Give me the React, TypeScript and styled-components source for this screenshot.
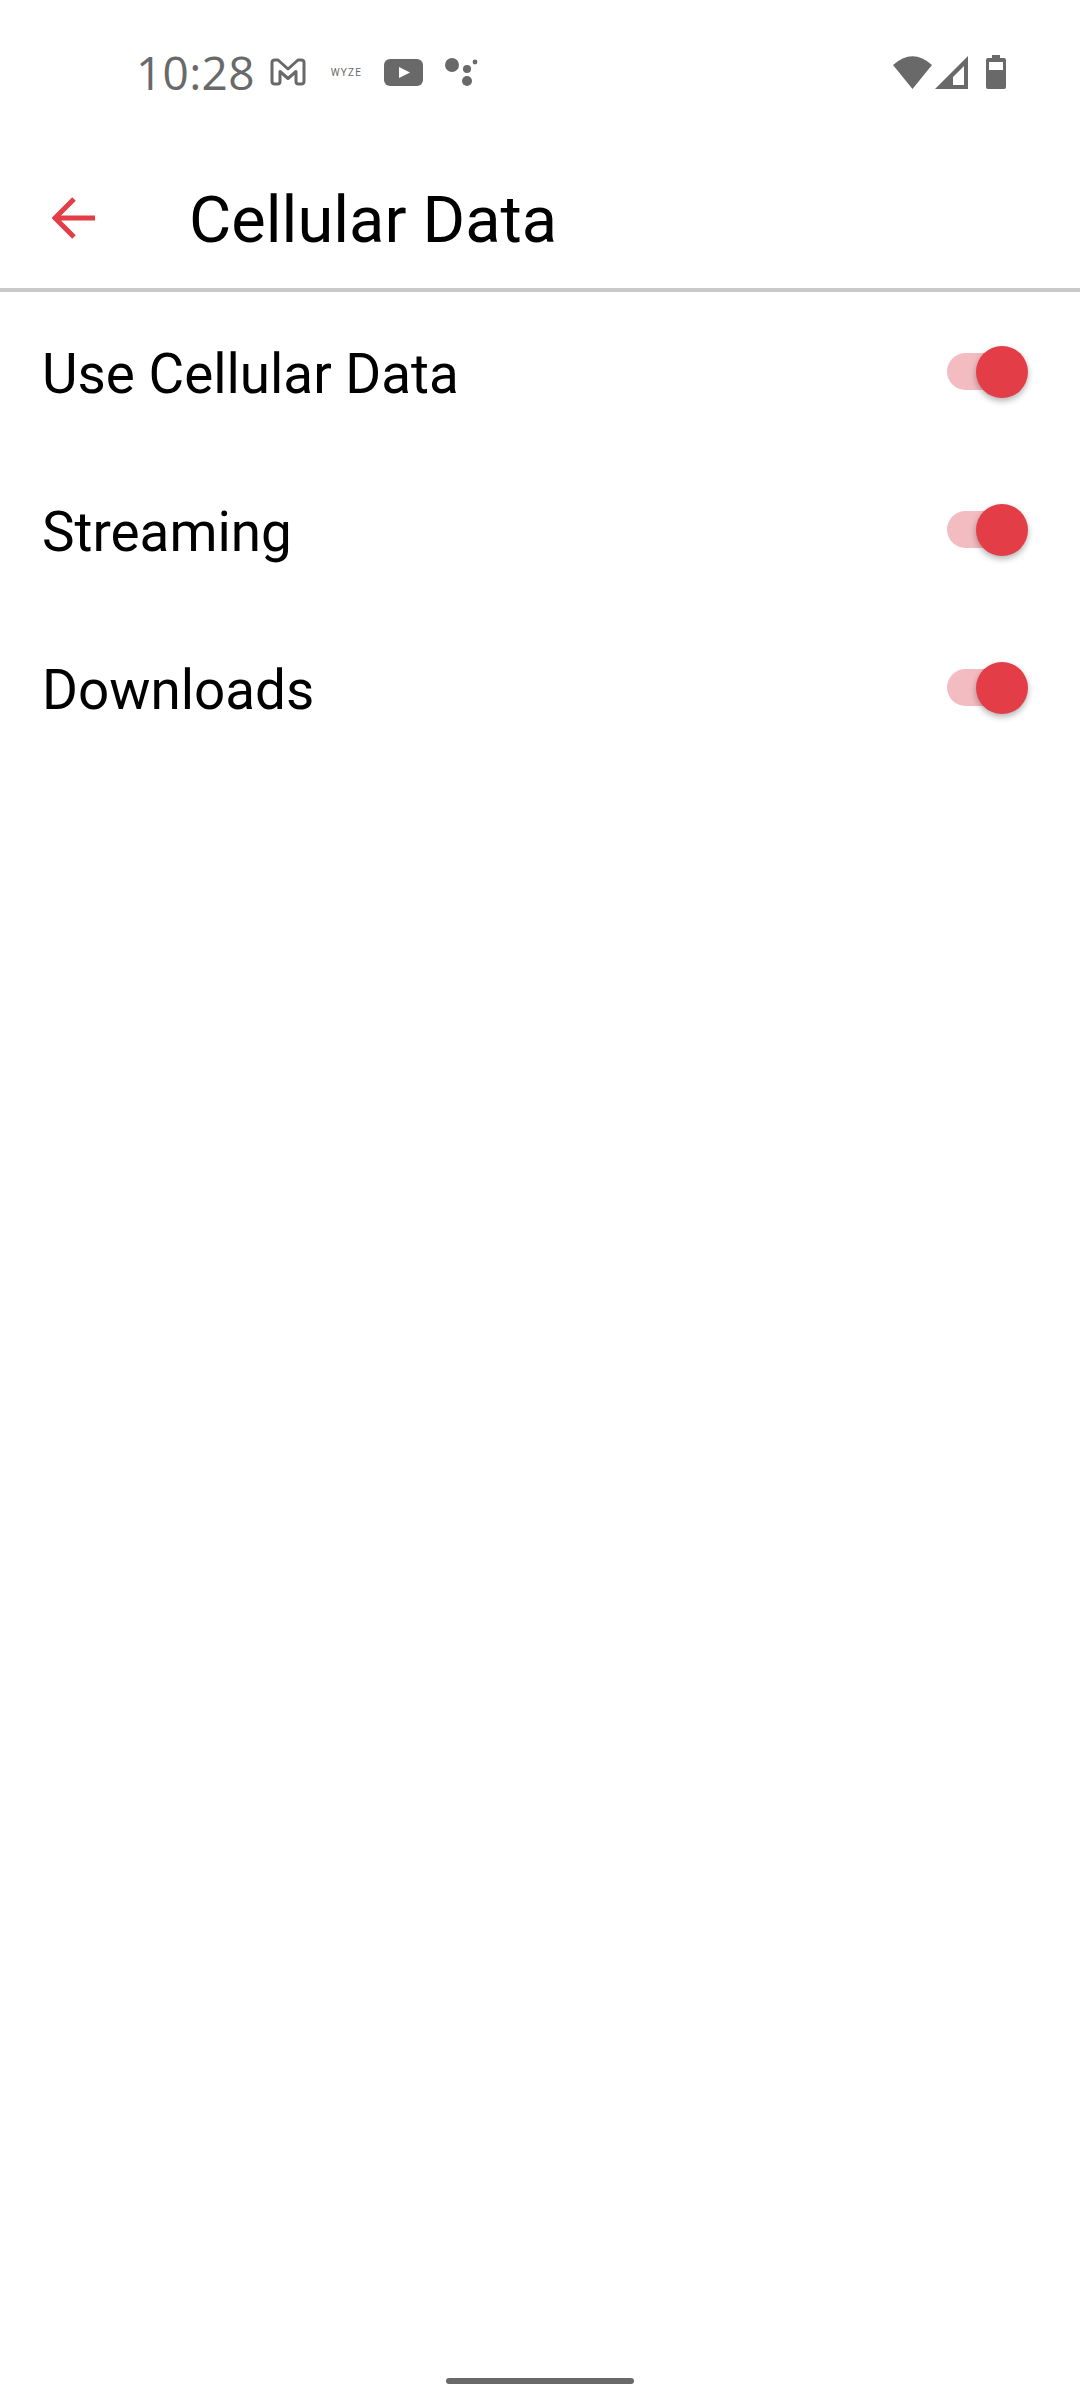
import * as React from 'react';
import styled, { createGlobalStyle } from 'styled-components';

const RED = '#e33d47';
const GREY = '#696969';

const GlobalStyle = createGlobalStyle`
  html, body {
    margin: 0;
    background: #fff;
    font-family: Roboto, "Liberation Sans", sans-serif;
  }
`;

const rows = ['Use Cellular Data', 'Streaming', 'Downloads'];

const App = () => (
  <>
    <GlobalStyle />
    <Screen>
      <StatusBar>
        <Notifications>
          <Time>10:28</Time>
          <svg width="36" height="28" viewBox="0 0 36 28">
            <path
              d="M2 4.5 Q2 2 5 2 L8 2 L18 11 L28 2 L31 2 Q34 2 34 4.5 L34 23.5 Q34 26 31 26 L28.5 26 Q26 26 26 23.5 L26 13.5 L18 20.5 L10 13.5 L10 23.5 Q10 26 7.5 26 L5 26 Q2 26 2 23.5 Z"
              fill="none"
              stroke={GREY}
              strokeWidth="3"
              strokeLinejoin="round"
            />
          </svg>
          <WyzeLabel>WYZE</WyzeLabel>
          <svg width="39" height="27" viewBox="0 0 39 27">
            <rect width="39" height="27" rx="6" fill={GREY} />
            <path d="M15 8 L26 13.5 L15 19 Z" fill="#fff" />
          </svg>
          <AssistantIcon width="35" height="28" viewBox="0 0 35 28">
            <circle cx="7" cy="7" r="7" fill={GREY} />
            <circle cx="22" cy="11" r="4" fill={GREY} />
            <circle cx="22" cy="23" r="5" fill={GREY} />
            <circle cx="30" cy="4" r="2.4" fill={GREY} />
          </AssistantIcon>
        </Notifications>
        <SystemIcons>
          <svg width="39" height="33" viewBox="0 0 39 33">
            <path d="M0 9 Q19.5 -8.5 39 9 L19.5 33 Z" fill={GREY} />
          </svg>
          <svg width="33" height="33" viewBox="0 0 33 33">
            <path fillRule="evenodd" d="M33 0 L33 33 L0 33 Z M29 10 L18 21 L18 29 L29 29 Z" fill={GREY} />
          </svg>
          <BatteryIcon width="20" height="34" viewBox="0 0 20 34">
            <path
              fillRule="evenodd"
              d="M6 0 H14 V3 H18 Q20 3 20 5 V32 Q20 34 18 34 H2 Q0 34 0 32 V5 Q0 3 2 3 H6 Z M3 7 V15 H17 V7 Z"
              fill={GREY}
            />
          </BatteryIcon>
        </SystemIcons>
      </StatusBar>

      <Header>
        <BackButton aria-label="Back">
          <svg width="44" height="44" viewBox="0 0 44 44">
            <path
              d="M43 22 H3 M22 3 L3 22 L22 41"
              fill="none"
              stroke={RED}
              strokeWidth="5"
            />
          </svg>
        </BackButton>
        <Title>Cellular Data</Title>
      </Header>

      <List>
        {rows.map((label) => (
          <Row key={label}>
            <RowLabel>{label}</RowLabel>
            <Toggle>
              <Track />
              <Thumb />
            </Toggle>
          </Row>
        ))}
      </List>

      <HomeBar />
    </Screen>
  </>
);

export default App;

const Screen = styled.div`
  width: 1080px;
  height: 2400px;
  display: flex;
  flex-direction: column;
  background: #fff;
  overflow: hidden;
`;

const StatusBar = styled.div`
  height: 144px;
  box-sizing: border-box;
  padding: 0 74px 0 136px;
  display: flex;
  align-items: center;
  justify-content: space-between;
`;

const Notifications = styled.div`
  display: flex;
  align-items: center;
  gap: 18px;
`;

const Time = styled.span`
  font-family: "Open Sans", Roboto, sans-serif;
  font-size: 46px;
  font-weight: 500;
  line-height: 50px;
  letter-spacing: 0.3px;
  color: ${GREY};
  margin-right: -3px;
`;

const WyzeLabel = styled.span`
  font-size: 10px;
  letter-spacing: 1.2px;
  color: ${GREY};
  width: 30px;
  margin: 0 5px 0 7px;
`;

const AssistantIcon = styled.svg`
  margin-left: 4px;
`;

const SystemIcons = styled.div`
  display: flex;
  align-items: center;
  gap: 3px;
`;

const BatteryIcon = styled.svg`
  margin-left: 15px;
`;

const Header = styled.div`
  height: 148px;
  box-sizing: border-box;
  padding-left: 52px;
  display: flex;
  align-items: center;
  border-bottom: 4px solid #c8c8c8;
`;

const BackButton = styled.div`
  width: 139px;
  margin-top: 3px;
  display: flex;
  align-items: center;
`;

const Title = styled.h1`
  margin: 8px 0 0 -2px;
  font-size: 65px;
  font-weight: 400;
  line-height: 70px;
  color: #000;
`;

const List = styled.div`
  padding-top: 1px;
  display: flex;
  flex-direction: column;
`;

const Row = styled.div`
  height: 158px;
  box-sizing: border-box;
  padding: 0 52px 0 42px;
  display: flex;
  align-items: center;
  justify-content: space-between;
`;

const RowLabel = styled.span`
  margin-top: 4px;
  font-size: 54.8px;
  line-height: 60px;
  color: #000;
`;

const Toggle = styled.div`
  position: relative;
  width: 81px;
  height: 52px;
  margin-top: -1px;
`;

const Track = styled.div`
  position: absolute;
  left: 0;
  top: 7px;
  width: 68px;
  height: 37px;
  border-radius: 19px;
  background: #f3bcc1;
`;

const Thumb = styled.div`
  position: absolute;
  right: 0;
  top: 0;
  width: 52px;
  height: 52px;
  border-radius: 50%;
  background: ${RED};
  box-shadow: 0 3px 6px rgba(0, 0, 0, 0.3);
`;

const HomeBar = styled.div`
  width: 188px;
  height: 6px;
  margin: auto auto 16px;
  border-radius: 3px;
  background: ${GREY};
`;
